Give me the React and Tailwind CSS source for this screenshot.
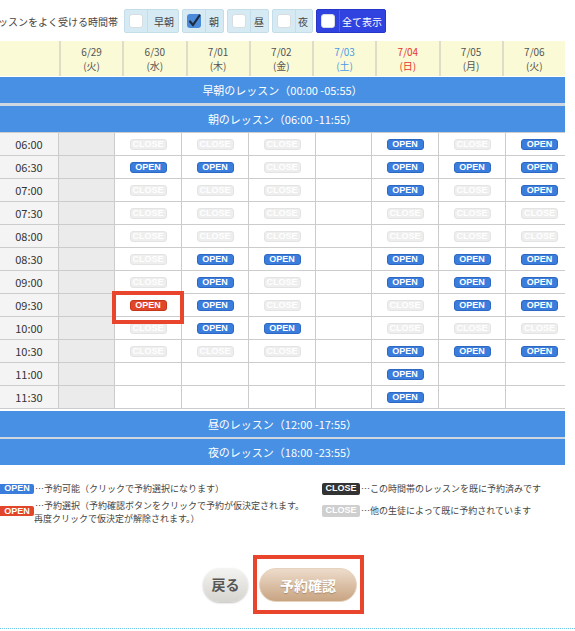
import React from "react";

const FONT = { fontFamily: '"Noto Sans CJK JP", "Noto Sans", sans-serif' };
const BADGE_FONT = { fontFamily: '"Liberation Sans", Arial, sans-serif' };

const dates = [
  { d: "6/29", w: "(火)", c: "text-[#555]" },
  { d: "6/30", w: "(水)", c: "text-[#555]" },
  { d: "7/01", w: "(木)", c: "text-[#555]" },
  { d: "7/02", w: "(金)", c: "text-[#555]" },
  { d: "7/03", w: "(土)", c: "text-[#4a9ae8]" },
  { d: "7/04", w: "(日)", c: "text-[#e8352c]" },
  { d: "7/05", w: "(月)", c: "text-[#555]" },
  { d: "7/06", w: "(火)", c: "text-[#555]" },
];

// columns: 6/30, 7/01, 7/02, 7/03, 7/04, 7/05, 7/06
const rows = [
  ["06:00", "CCC_OCO"],
  ["06:30", "OOC_OOO"],
  ["07:00", "CCC_OCO"],
  ["07:30", "CCC_CCC"],
  ["08:00", "CCC_CCC"],
  ["08:30", "COO_OOO"],
  ["09:00", "COC_OOO"],
  ["09:30", "ROC_COO"],
  ["10:00", "COO_CCC"],
  ["10:30", "CCC_OOO"],
  ["11:00", "____O__"],
  ["11:30", "____O__"],
];

function Badge({ kind }) {
  const base =
    "w-[37px] h-[11px] rounded-[3px] flex items-center justify-center text-[9px] font-bold leading-none";
  if (kind === "O")
    return (
      <div className={base + " bg-[#3a7ddc] border border-[#2d69c2] text-white"} style={BADGE_FONT}>
        OPEN
      </div>
    );
  if (kind === "R")
    return (
      <div className={base + " bg-[#e2462a] border border-[#c33618] text-white"} style={BADGE_FONT}>
        OPEN
      </div>
    );
  if (kind === "C")
    return (
      <div className={base + " bg-[#eeeeee] border border-[#e4e4e4] text-white"} style={BADGE_FONT}>
        CLOSE
      </div>
    );
  return null;
}

function Band({ children }) {
  return (
    <div className="h-[26px] bg-[#4790e3] flex items-center justify-center text-white text-[11px]">
      {children}
    </div>
  );
}

function Check({ label, checked, all }) {
  return (
    <div
      className={
        "h-[24px] flex items-center rounded-[2px] border " +
        (all ? "bg-[#3042e0] border-[#2636c8]" : "bg-[#d6eaf4] border-[#c5dde9]")
      }
    >
      <div className={"h-full flex items-center px-[4px] border-r " + (all ? "border-[#4c5ce8]" : "border-[#c5dde9]")}>
        {checked ? (
          <div className="w-[14px] h-[14px] rounded-[3px] bg-[#4a8ad8] flex items-center justify-center">
            <svg width="14" height="14" viewBox="0 0 14 14">
              <path d="M3 7.5 L6 11 L12.5 1.5" fill="none" stroke="#1f2a3a" strokeWidth="2.2" strokeLinecap="round" />
            </svg>
          </div>
        ) : (
          <div className="w-[14px] h-[14px] rounded-[3px] bg-white border border-[#d8dde2]" />
        )}
      </div>
      <div
        className={
          "text-[10px] flex-1 text-right whitespace-nowrap " + (all ? "text-white pr-[3px]" : "text-[#444] pr-[4px]")
        }
      >
        {label}
      </div>
    </div>
  );
}

export default function App() {
  return (
    <div className="relative w-[575px] h-[631px] overflow-hidden bg-white" style={FONT}>
      {/* time preference bar */}
      <div className="flex items-center pt-[9px] h-[33px]">
        <div className="w-[124px] flex justify-end pr-[6px] whitespace-nowrap text-[10px] text-[#444]">
          <span className="shrink-0">レッスンをよく受ける時間帯</span>
        </div>
        <div className="flex gap-[3px]">
          <div className="w-[55px]"><Check label="早朝" /></div>
          <div className="w-[42px]"><Check label="朝" checked /></div>
          <div className="w-[42px]"><Check label="昼" /></div>
          <div className="w-[41px]"><Check label="夜" /></div>
          <div className="w-[70px]"><Check label="全て表示" all /></div>
        </div>
      </div>

      {/* date header */}
      <div className="mt-[8px] w-[565px] grid grid-cols-[59px_repeat(8,1fr)] h-[35px] bg-[#fafad6]">
        <div />
        {dates.map((x) => (
          <div
            key={x.d}
            className={"border-l-2 border-[#deddc8] flex flex-col items-center justify-center text-[10px] leading-[14px] pt-[1px] " + x.c}
          >
            <span>{x.d}</span>
            <span>{x.w}</span>
          </div>
        ))}
      </div>

      <div className="w-[565px] mt-px flex flex-col gap-[3px] bg-[#cfd8e0]">
        <Band>早朝のレッスン（00:00 -05:55）</Band>
        <Band>朝のレッスン（06:00 -11:55）</Band>
      </div>

      {/* schedule body */}
      <div className="w-[565px] grid grid-cols-[58px_55px_66px_66px_66px_55px_66px_66px_67px] gap-px bg-[#cccccc] border-y border-r border-[#cccccc]">
        {rows.map(([t, s]) => (
          <React.Fragment key={t}>
            <div className="h-[22px] bg-[#f4f4f4] flex items-center justify-center text-[11px] text-[#333]">{t}</div>
            <div className="h-[22px] bg-[#ebebeb]" />
            {s.split("").map((k, i) => (
              <div key={i} className="h-[22px] bg-white flex items-center justify-center">
                <Badge kind={k} />
              </div>
            ))}
          </React.Fragment>
        ))}
      </div>

      <div className="w-[565px] mt-[2px] flex flex-col gap-[2px] bg-[#cfd8e0]">
        <Band>昼のレッスン（12:00 -17:55）</Band>
        <Band>夜のレッスン（18:00 -23:55）</Band>
      </div>

      {/* legend */}
      <div className="mt-[17px] flex text-[9px] text-[#444] leading-[13px]">
        <div className="w-[322px] flex flex-col gap-[3px]">
          <div className="flex items-center">
            <div className="w-[34px] h-[10px] bg-[#3a7ddc] rounded-r-[2px] text-white text-[9px] font-bold flex items-center justify-center" style={BADGE_FONT}>OPEN</div>
            <span className="ml-[1px]">…予約可能（クリックで予約選択になります）</span>
          </div>
          <div className="flex items-start">
            <div className="mt-[8px] w-[34px] h-[10px] bg-[#e2462a] rounded-r-[2px] text-white text-[9px] font-bold flex items-center justify-center shrink-0" style={BADGE_FONT}>OPEN</div>
          </div>
        </div>
        <div className="flex flex-col gap-[9px]">
          <div className="flex items-center">
            <div className="w-[38px] h-[12px] bg-[#333333] rounded-[2px] text-white text-[9px] font-bold flex items-center justify-center" style={BADGE_FONT}>CLOSE</div>
            <span className="ml-[1px]">…この時間帯のレッスンを既に予約済みです</span>
          </div>
          <div className="flex items-center">
            <div className="w-[38px] h-[12px] bg-[#cfcfcf] rounded-[2px] text-white text-[9px] font-bold flex items-center justify-center" style={BADGE_FONT}>CLOSE</div>
            <span className="ml-[1px]">…他の生徒によって既に予約されています</span>
          </div>
        </div>
      </div>
      <div className="absolute left-[35px] top-[499px] text-[9px] text-[#444] leading-[13px]">
        <div>…予約選択（予約確認ボタンをクリックで予約が仮決定されます。</div>
        <div className="-ml-[1px]">再度クリックで仮決定が解除されます。）</div>
      </div>

      {/* buttons */}
      <div className="absolute left-0 right-0 top-[555px] flex items-center">
        <div className="ml-[203px] w-[45px] h-[34px] rounded-full bg-gradient-to-b from-[#f4f4f2] to-[#d6d4cf] shadow-[0_1px_2px_rgba(0,0,0,0.25)] flex items-center justify-center text-[14px] font-bold text-[#555]">
          戻る
        </div>
        <div className="ml-[5px] border-4 border-[#e8452c] pl-[2px] pr-[3px] pt-[9px] pb-[8px]">
          <div className="w-[98px] h-[34px] rounded-full bg-gradient-to-b from-[#eddccb] to-[#c8a482] border border-[#e6d2bd] flex items-center justify-center text-[14px] font-bold text-white [text-shadow:0_1px_1px_rgba(120,80,40,0.4)]">
            予約確認
          </div>
        </div>
      </div>
      <div className="absolute left-0 right-0 top-[628px] border-t border-dotted border-[#6cc8e8]" />

      {/* selection highlight */}
      <div className="absolute left-[112px] top-[291px] w-[72px] h-[33px] border-4 border-[#e8452c]" />
    </div>
  );
}
